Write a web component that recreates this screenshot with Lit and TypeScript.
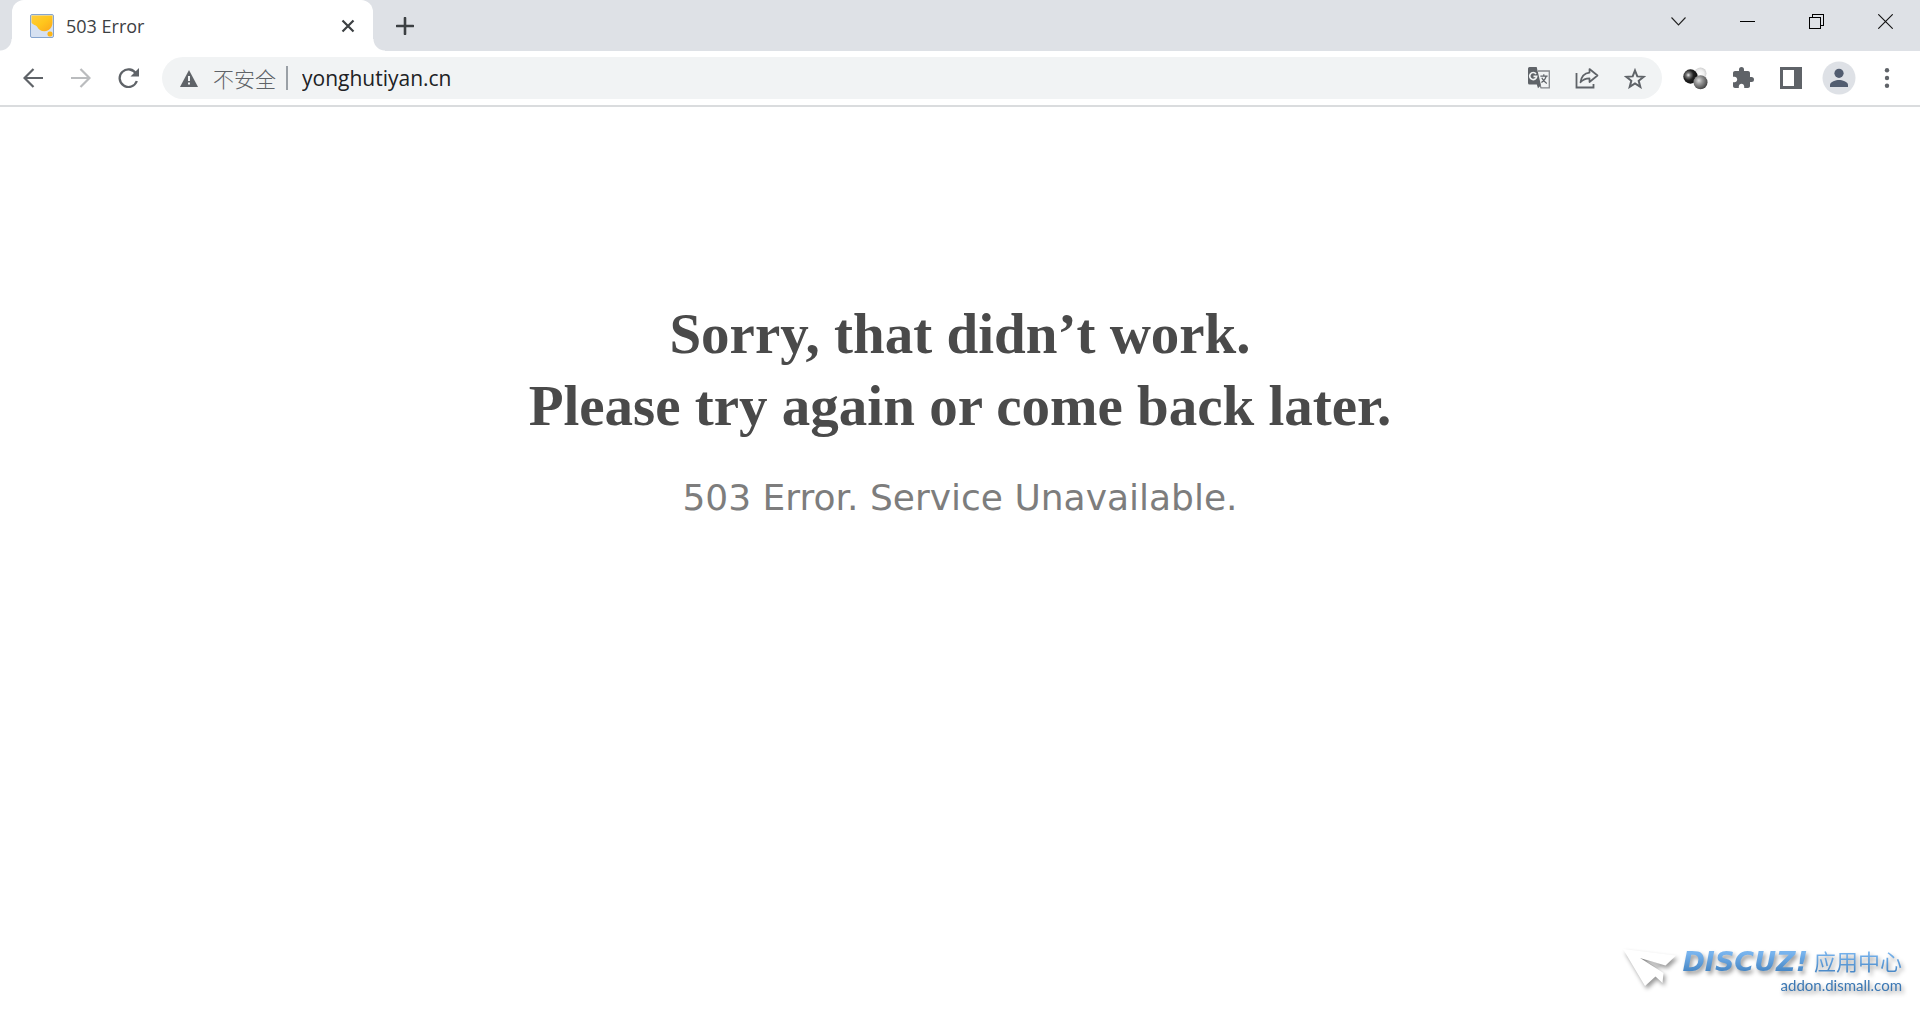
import { LitElement, html, css, svg } from "lit";
import { customElement, state } from "lit/decorators.js";

const icons = {
  favicon: svg`<svg width="24" height="24" viewBox="0 0 24 24">
    <defs><linearGradient id="sun" x1="0" y1="0" x2="1" y2="1"><stop offset="0" stop-color="#ffce3c"/><stop offset=".5" stop-color="#ffc61c"/><stop offset="1" stop-color="#fba61c"/></linearGradient></defs>
    <rect x=".5" y=".5" width="23" height="23" rx="1.5" fill="#d6e1f1" stroke="#86a5cf"/>
    <path d="M1.500 1.500h21v7c0 5-3.500 8.700-8 8.700-3.800 0-5.800-1.600-7.200-4.200C6 10.500 3 11.500 1.500 8.500z" fill="url(#sun)"/>
    <rect x="17.500" y="17.500" width="5" height="5" rx="2" fill="#fdb515"/></svg>`,
  closeTab: svg`<svg width="14" height="14" viewBox="0 0 14 14"><path d="M1.500 1.500l11 11M12.500 1.500l-11 11" stroke="#3c4043" stroke-width="2.200"/></svg>`,
  plus: svg`<svg width="18" height="18" viewBox="0 0 18 18"><path d="M9 1v16M1 9h16" stroke="#3c4043" stroke-width="2.600" stroke-linecap="round"/></svg>`,
  chevron: svg`<svg width="15" height="9" viewBox="0 0 15 9"><path d="M.5.5l7 7.500 7-7.500" fill="none" stroke="#222" stroke-width="1.100"/></svg>`,
  minimize: svg`<svg width="15" height="15" viewBox="0 0 15 15" shape-rendering="crispEdges"><path d="M0 7.500h15" stroke="#000"/></svg>`,
  restore: svg`<svg width="15" height="15" viewBox="0 0 15 15" shape-rendering="crispEdges"><path d="M.5 3.500h11v11H.5zM3.500 3.500v-3h11v11h-3" fill="none" stroke="#000"/></svg>`,
  close: svg`<svg width="15" height="15" viewBox="0 0 15 15"><path d="M.3.300l14.400 14.400M14.700.300L.3 14.700" stroke="#111" stroke-width="1.100"/></svg>`,
  back: svg`<svg width="20" height="20" viewBox="0 0 20 20"><path d="M20 10H2M10.500 1L1.500 10l9 9" fill="none" stroke="#5f6368" stroke-width="2.200"/></svg>`,
  forward: svg`<svg width="20" height="20" viewBox="0 0 20 20"><path d="M0 10h18M9.500 1l9 9-9 9" fill="none" stroke="#babcbe" stroke-width="2.200"/></svg>`,
  reload: svg`<svg width="22" height="20" viewBox="0 0 22 20"><path d="M18.200 6A8.800 8.800 0 1 0 18.800 13" fill="none" stroke="#5f6368" stroke-width="2.300"/><path d="M21 0v8.500h-8.500z" fill="#5f6368"/></svg>`,
  warning: svg`<svg width="18" height="17" viewBox="0 0 18 17"><path d="M9 0l9 17H0z" fill="#5f6368"/><path d="M9 6v5M9 12.500v2" stroke="#f1f3f4" stroke-width="2"/></svg>`,
  translate: svg`<svg width="22" height="22" viewBox="0 0 22 22">
    <path d="M10 4h11.300v16.800H13L11.500 17" fill="none" stroke="#84878b" stroke-width="1.300"/>
    <path d="M1.500 0h7.200l.8 3.400 3.200 13.600 0 1.500-2.700 2.700-1.200-3.700H1.500A1.500 1.500 0 0 1 0 16V1.500A1.500 1.500 0 0 1 1.500 0z" fill="#5f6368"/>
    <path d="M8 6.900A3.500 3.500 0 1 0 8.700 9.300H5.500" fill="none" stroke="#f1f3f4" stroke-width="1.700"/>
    <path d="M12.400 9.200h7.200M15.800 7.200v2M18.200 9.200c-.6 2.800-2.600 5.100-4.800 6.400M13.800 10.800c.8 2.200 2.600 4.200 5 5.700" fill="none" stroke="#5f6368" stroke-width="1.200"/></svg>`,
  share: svg`<svg width="24" height="22" viewBox="0 0 24 22"><path d="M1.500 6v14.500h17V17" fill="none" stroke="#5f6368" stroke-width="1.800"/><path d="M14.500 2l8 6.500-8 6.500v-3.700c-4 0-6.500 1-9 4 .8-5.300 3.500-9 9-9.600z" fill="none" stroke="#5f6368" stroke-width="1.700" stroke-linejoin="round"/></svg>`,
  star: svg`<svg width="22" height="21" viewBox="0 0 22 21"><path d="M11 2.500l2.300 5.900 6.300.4-4.900 4 1.600 6.100L11 15.500l-5.300 3.400 1.600-6.100-4.900-4 6.300-.4z" fill="none" stroke="#5f6368" stroke-width="2"/></svg>`,
  spheres: svg`<svg width="25" height="23" viewBox="0 0 25 23">
    <defs>
      <radialGradient id="dark" cx=".35" cy=".4" r=".6"><stop offset="0" stop-color="#eee"/><stop offset=".25" stop-color="#777"/><stop offset=".6" stop-color="#222"/><stop offset="1" stop-color="#111"/></radialGradient>
      <radialGradient id="mid" cx=".38" cy=".38" r=".62"><stop offset="0" stop-color="#ddd"/><stop offset=".4" stop-color="#999"/><stop offset="1" stop-color="#4a4a4a"/></radialGradient>
      <radialGradient id="light" cx=".45" cy=".55" r=".55"><stop offset="0" stop-color="#fff"/><stop offset=".6" stop-color="#f0f0f0"/><stop offset="1" stop-color="#d0d0d0"/></radialGradient>
    </defs>
    <circle cx="17.500" cy="6.500" r="6" fill="url(#light)"/><circle cx="7.500" cy="9.500" r="7.200" fill="url(#dark)"/><circle cx="17.500" cy="15.200" r="7" fill="url(#mid)"/></svg>`,
  puzzle: svg`<svg width="22" height="22" viewBox="1 1 22 22"><path d="M20.500 11H19V7c0-1.100-.9-2-2-2h-4V3.500a2.500 2.500 0 0 0-5 0V5H4c-1.100 0-1.990.9-1.990 2v3.800H3.500c1.490 0 2.700 1.210 2.700 2.700s-1.210 2.700-2.700 2.700H2V20c0 1.100.9 2 2 2h3.800v-1.500c0-1.490 1.210-2.700 2.700-2.700s2.700 1.210 2.700 2.700V22H17c1.100 0 2-.9 2-2v-4h1.500a2.500 2.500 0 0 0 0-5z" fill="#5f6368"/></svg>`,
  panel: svg`<svg width="22" height="22" viewBox="0 0 22 22"><path d="M0 0h22v22H0zM3 3v16h11V3z" fill="#5f6368" fill-rule="evenodd"/></svg>`,
  person: svg`<svg width="34" height="34" viewBox="0 0 34 34"><circle cx="17" cy="17" r="16.500" fill="#dee1e6"/><circle cx="17" cy="12.300" r="4.600" fill="#525d70"/><path d="M8 26v-2.200c0-3.300 6-4.900 9-4.900s9 1.600 9 4.900V26z" fill="#525d70"/></svg>`,
  menu: svg`<svg width="6" height="20" viewBox="0 0 6 20"><g fill="#5f6368"><circle cx="3" cy="2.200" r="2.200"/><circle cx="3" cy="10" r="2.200"/><circle cx="3" cy="17.800" r="2.200"/></g></svg>`,
  plane: svg`<svg width="60" height="46" viewBox="0 0 60 46">
    <defs><linearGradient id="fold" x1="0" y1="0" x2="1" y2=".4"><stop offset="0" stop-color="#666"/><stop offset=".5" stop-color="#bbb"/><stop offset="1" stop-color="#fff" stop-opacity="0"/></linearGradient></defs>
    <path d="M18 10l25 7-9 2z" fill="url(#fold)"/>
    <path d="M1 1l53 6.500-10.500 10L18 10l23.500 15-1 10-7-6.500L23 38z" fill="#fff"/></svg>`,
};

@customElement("app-root")
export class AppRoot extends LitElement {
  @state() private address = "yonghutiyan.cn";

  static styles = css`
    :host {
      display: flex;
      flex-direction: column;
      min-height: 100vh;
      background: #fff;
      font-family: "Open Sans", "Noto Sans CJK SC", sans-serif;
    }
    svg { display: block; }
    button {
      display: flex;
      align-items: center;
      justify-content: center;
      padding: 0;
      border: 0;
      background: none;
      font: inherit;
    }
    .strip {
      display: flex;
      height: 51px;
      padding-left: 12px;
      background: #dee1e6;
    }
    .tab {
      position: relative;
      display: flex;
      align-items: center;
      gap: 12px;
      width: 361px;
      box-sizing: border-box;
      padding: 0 12px 0 18px;
      border-radius: 12px 12px 0 0;
      background: #fff;
      color: #3c4043;
      font-size: 18px;
    }
    .tab::before, .tab::after {
      content: "";
      position: absolute;
      bottom: 0;
      width: 12px;
      height: 12px;
    }
    .tab::before {
      right: 100%;
      background: radial-gradient(circle at 0 0, transparent 11px, #fff 12px);
    }
    .tab::after {
      left: 100%;
      background: radial-gradient(circle at 100% 0, transparent 11px, #fff 12px);
    }
    .title { flex: 1; }
    .tab-close { width: 26px; height: 26px; }
    .new-tab { width: 40px; margin-left: 12px; }
    .window { display: flex; margin-left: auto; height: 43px; }
    .window button { width: 69px; }
    .toolbar {
      display: flex;
      align-items: center;
      height: 54px;
      padding: 0 9px;
      border-bottom: 2px solid #dadcde;
    }
    .tool { width: 48px; height: 42px; }
    .omnibox {
      display: flex;
      flex: 1;
      align-items: center;
      height: 42px;
      box-sizing: border-box;
      margin: 0 9px;
      padding: 0 3px 0 18px;
      border-radius: 21px;
      background: #f1f3f4;
    }
    .security { gap: 15px; color: #5f6368; font-size: 21px; font-weight: 300; }
    .divider { width: 2px; height: 24px; margin: 0 14px 0 10px; background: #9aa0a6; }
    .address {
      flex: 1;
      min-width: 0;
      padding: 0;
      border: 0;
      outline: 0;
      background: none;
      color: #202124;
      font: 21px "Open Sans", sans-serif;
    }
    main { padding: 191px 24px 0; text-align: center; }
    h1 {
      margin: 0;
      color: #4a4a4a;
      font: bold 57px/72px Georgia, "Liberation Serif", serif;
    }
    p {
      margin: 32px 0 0;
      color: #7d7d7d;
      font: 36px/48px Verdana, "DejaVu Sans", sans-serif;
    }
    .badge {
      position: absolute;
      right: 18px;
      bottom: 16px;
      display: flex;
      text-decoration: none;
      filter: drop-shadow(2px 3px 2px rgba(0, 0, 0, 0.4));
    }
    .words { display: flex; flex-direction: column; align-items: flex-end; }
    .brand { display: flex; align-items: center; gap: 6px; height: 28px; }
    .discuz, .center {
      color: transparent;
      background: linear-gradient(#78b4ee 20%, #4080bf 90%);
      background-clip: text;
      -webkit-background-clip: text;
    }
    .discuz { font: italic bold 27px/30px "DejaVu Sans", sans-serif; }
    .center { padding-bottom: 4px; font: 22px/30px "Noto Sans CJK SC", sans-serif; }
    .domain { color: #3c78b4; font: 15px/18px Lato, sans-serif; }
  `;

  private tool(label: string, icon: unknown) {
    return html`<button class="tool" aria-label=${label}>${icon}</button>`;
  }

  private onInput(e: Event) {
    this.address = (e.target as HTMLInputElement).value;
  }

  render() {
    return html`
      <header>
        <div class="strip">
          <div class="tab">
            ${icons.favicon}<span class="title">503 Error</span>
            <button class="tab-close" aria-label="Close tab">${icons.closeTab}</button>
          </div>
          <button class="new-tab" aria-label="New tab">${icons.plus}</button>
          <div class="window">
            <button aria-label="Search tabs">${icons.chevron}</button>
            <button aria-label="Minimize">${icons.minimize}</button>
            <button aria-label="Restore">${icons.restore}</button>
            <button aria-label="Close">${icons.close}</button>
          </div>
        </div>
        <nav class="toolbar">
          ${this.tool("Back", icons.back)}
          ${this.tool("Forward", icons.forward)}
          ${this.tool("Reload", icons.reload)}
          <div class="omnibox">
            <button class="security">${icons.warning}<span>不安全</span></button>
            <span class="divider"></span>
            <input class="address" aria-label="Address" spellcheck="false" .value=${this.address} @input=${this.onInput} />
            ${this.tool("Translate", icons.translate)}
            ${this.tool("Share", icons.share)}
            ${this.tool("Bookmark", icons.star)}
          </div>
          ${this.tool("Color extension", icons.spheres)}
          ${this.tool("Extensions", icons.puzzle)}
          ${this.tool("Side panel", icons.panel)}
          ${this.tool("Profile", icons.person)}
          ${this.tool("Menu", icons.menu)}
        </nav>
      </header>
      <main>
        <h1>Sorry, that didn’t work.<br />Please try again or come back later.</h1>
        <p>503 Error. Service Unavailable.</p>
      </main>
      <a class="badge" href="#addon">
        ${icons.plane}
        <span class="words">
          <span class="brand"><span class="discuz">DISCUZ!</span><span class="center">应用中心</span></span>
          <span class="domain">addon.dismall.com</span>
        </span>
      </a>
    `;
  }
}
